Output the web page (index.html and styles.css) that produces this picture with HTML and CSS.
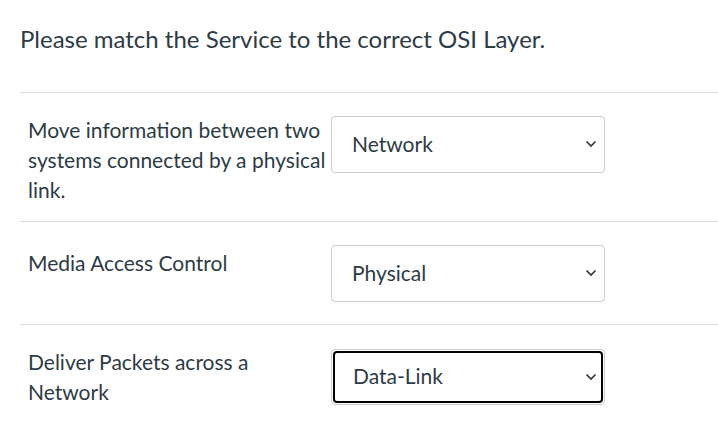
FILE: index.html
```html
<!DOCTYPE html>
<html lang="en">
<head>
<meta charset="utf-8">
<title>Matching question</title>
<link rel="stylesheet" href="styles.css">
</head>
<body>
<div class="question">
  <p class="prompt">Please match the Service to the correct OSI Layer.</p>
  <div class="answers">
    <div class="row">
      <label class="label" for="s1">Move information between two systems connected by a physical link.</label>
      <div class="select-wrap">
        <select id="s1" class="select"><option>Network</option></select>
        <svg class="chev" viewBox="0 0 12 8" width="12" height="8"><path d="M1.5 1.5 L6 6 L10.5 1.5" fill="none" stroke="#2d3b45" stroke-width="1.7"/></svg>
      </div>
    </div>
    <div class="row">
      <label class="label label--low" for="s2">Media Access Control</label>
      <div class="select-wrap">
        <select id="s2" class="select"><option>Physical</option></select>
        <svg class="chev" viewBox="0 0 12 8" width="12" height="8"><path d="M1.5 1.5 L6 6 L10.5 1.5" fill="none" stroke="#2d3b45" stroke-width="1.7"/></svg>
      </div>
    </div>
    <div class="row row--last">
      <label class="label" for="s3">Deliver Packets across a Network</label>
      <div class="select-wrap select-wrap--focus">
        <select id="s3" class="select"><option>Data-Link</option></select>
        <svg class="chev" viewBox="0 0 12 8" width="12" height="8"><path d="M1.5 1.5 L6 6 L10.5 1.5" fill="none" stroke="#2d3b45" stroke-width="1.7"/></svg>
      </div>
    </div>
  </div>
</div>
</body>
</html>
```
FILE: styles.css
```css
html, body {
  margin: 0;
  padding: 0;
  background: #ffffff;
}
body {
  font-family: Lato, "Open Sans", sans-serif;
  color: #2d3b45;
}
.question {
  padding-left: 20px;
}
.prompt {
  margin: 0;
  padding-top: 22px;
  height: 92px;
  box-sizing: border-box;
  font-size: 24px;
  line-height: 34px;
}
.answers {
  border-top: 1px solid #dadada;
}
.row {
  display: flex;
  align-items: flex-start;
  gap: 5px;
  padding: 23px 0 15px 8px;
  border-bottom: 1px solid #dadada;
}
.row--last {
  border-bottom: none;
}
.label {
  width: 298px;
  font-size: 21px;
  line-height: 30px;
  margin: -1px 0 1px;
}
.label--low {
  padding-top: 4px;
}
.select-wrap {
  position: relative;
  margin: 0 0 7px;
  width: 274px;
  height: 57px;
  box-sizing: border-box;
  border: 1px solid #c7cdd1;
  border-radius: 4px;
  background: #fff;
}
.select-wrap--focus {
  margin-top: 1px;
  height: 56px;
}
.select-wrap--focus .select {
  border: 2px solid #000;
  border-radius: 4px;
  margin: 1px;
  height: calc(100% - 2px);
  width: calc(100% - 2px);
}
.select {
  appearance: none;
  -webkit-appearance: none;
  display: block;
  width: 100%;
  height: 100%;
  box-sizing: border-box;
  border: none;
  background: transparent;
  font-family: Lato, "Open Sans", sans-serif;
  font-size: 21px;
  color: #2d3b45;
  padding: 0 0 3px 20px;
  outline: none;
}
.select-wrap--focus .select {
  padding-left: 18px;
}
.chev {
  position: absolute;
  right: 7px;
  top: 23px;
  pointer-events: none;
}
```
